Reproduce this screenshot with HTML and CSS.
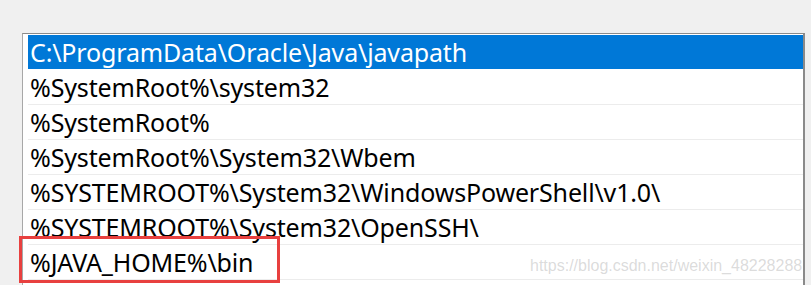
FILE: index.html
```html
<!DOCTYPE html>
<html lang="en">
<head>
    <meta charset="UTF-8">
    <title>Path list</title>
    <link rel="stylesheet" href="styles.css">
</head>
<body>
<div class="listbox">
    <div class="row selected">C:\ProgramData\Oracle\Java\javapath</div>
    <div class="row">%SystemRoot%\system32</div>
    <div class="row">%SystemRoot%</div>
    <div class="row">%SystemRoot%\System32\Wbem</div>
    <div class="row">%SYSTEMROOT%\System32\WindowsPowerShell\v1.0\</div>
    <div class="row">%SYSTEMROOT%\System32\OpenSSH\</div>
    <div class="row marked">%JAVA_HOME%\bin<span class="highlight"></span></div>
    <div class="row"></div>
</div>
<div class="watermark">https://blog.csdn.net/weixin_48228288</div>
</body>
</html>
```

FILE: styles.css
```css
body { margin: 0; background: #f0f0f0; font-family: "Noto Sans", "Open Sans", sans-serif; height: 285px; overflow: hidden; position: relative; }
.listbox { margin: 33px 0 0 22px; width: 783px; box-sizing: border-box; background: #fff; border: 1px solid #8a8a8a; border-left-color: #a8a8a8; border-right-width: 2px; padding: 1px 0 0 5px; }
.row { height: 34px; line-height: 34px; border-bottom: 1px solid #ececec; padding-left: 2px; font-size: 25px; letter-spacing: -0.15px; color: #000; white-space: nowrap; position: relative; }
.row.selected { background: #0078d7; color: #fff; border-bottom-color: #fff; }
.highlight { position: absolute; left: -9px; top: -9px; width: 261px; height: 47px; box-sizing: border-box; border: 3px solid #e8403f; }
.watermark { position: absolute; left: 530px; top: 257px; font-family: "Liberation Sans", Arial, sans-serif; font-size: 16px; color: rgba(175, 175, 175, 0.45); }
```
